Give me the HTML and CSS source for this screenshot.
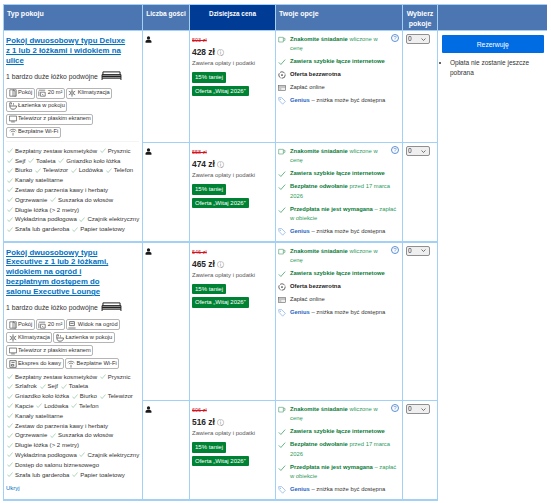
FILE: index.html
```html
<!DOCTYPE html>
<html lang="pl">
<head>
<meta charset="utf-8">
<title>Typ pokoju</title>
<link rel="stylesheet" href="styles.css">
</head>
<body>
<svg class="defs" width="0" height="0" aria-hidden="true">
  <symbol id="i-check" viewBox="0 0 10 10"><path d="M1 5.500l2.600 2.600L9 2" fill="none" stroke="currentColor" stroke-width=".9"/></symbol>
  <symbol id="i-person" viewBox="0 0 10 10"><circle cx="5" cy="2.800" r="2.300" fill="#1a1a1a"/><path d="M.8 9.500V8c0-1.800 1.600-2.600 4.200-2.600S9.200 6.200 9.200 8v1.500z" fill="#1a1a1a"/></symbol>
  <symbol id="i-bed" viewBox="0 0 23 10"><path d="M2 4V1h19v3M1 4h21v4H1zM1 8v2M22 8v2" fill="none" stroke="#222" stroke-width="1.100"/><path d="M1 6h21" stroke="#222" stroke-width="2"/></symbol>
  <symbol id="i-cup" viewBox="0 0 12 10"><path d="M1 1h7v7H1zM8 2.500h2.500v3H8" fill="none" stroke="#4d9a6c" stroke-width=".9"/></symbol>
  <symbol id="i-tag" viewBox="0 0 12 12"><path d="M1 1h4.500L11 6.500 7 10.800 1.500 5z" fill="none" stroke="#6f9fdf" stroke-width=".9"/><circle cx="3.500" cy="3.500" r=".8" fill="#6f9fdf"/></symbol>
  <symbol id="i-rot" viewBox="0 0 12 12"><circle cx="6" cy="6" r="4.800" fill="none" stroke="#333" stroke-width="1.100" stroke-dasharray="8 1.500"/><circle cx="6" cy="6" r="1.300" fill="#333"/></symbol>
  <symbol id="i-card" viewBox="0 0 12 10"><rect x=".5" y="1" width="11" height="8" fill="#eee" stroke="#666" stroke-width=".9"/><path d="M.5 3.500h11M2 6.500h3" stroke="#666" stroke-width=".9"/></symbol>
  <symbol id="i-door" viewBox="0 0 10 10"><path d="M1 1h8v8H1zM5 1v8M5 1l2.500 1.500v7" fill="none" stroke="#444" stroke-width=".8"/></symbol>
  <symbol id="i-size" viewBox="0 0 10 10"><path d="M1 1.500h8M1 3v6M3 4h6v5H3zM5 6l2 2" fill="none" stroke="#444" stroke-width=".8"/></symbol>
  <symbol id="i-snow" viewBox="0 0 10 10"><path d="M5 .5v9M1 2.800l8 4.400M9 2.800L1 7.200" stroke="#444" stroke-width=".9"/><circle cx="5" cy="5" r="1.500" fill="#fff" stroke="#444" stroke-width=".7"/></symbol>
  <symbol id="i-bath" viewBox="0 0 10 10"><path d="M1 1v4h8.500C9 8 7.500 9 5 9S1.500 8 1 5M1 1h2v2M5 2h1M5 3.500h1" fill="none" stroke="#444" stroke-width=".9"/></symbol>
  <symbol id="i-tv" viewBox="0 0 11 10"><path d="M.5 1h10v6.500H.5zM3 9h5" fill="none" stroke="#444" stroke-width=".9"/></symbol>
  <symbol id="i-wifi" viewBox="0 0 10 10"><path d="M.8 3.500C3.200 1 6.800 1 9.200 3.500M2.300 5C4 3.500 6 3.500 7.700 5M5 6v3.500" fill="none" stroke="#444" stroke-width=".8"/></symbol>
  <symbol id="i-view" viewBox="0 0 10 10"><path d="M2 .8h6v5H2zM.5 8.800h9M3 3h4" fill="none" stroke="#444" stroke-width=".9"/></symbol>
  <symbol id="i-coffee" viewBox="0 0 10 10"><path d="M1 .8h8v8.400H1zM3 3h4M3 5.500h3v2H3z" fill="none" stroke="#444" stroke-width=".9"/></symbol>
</svg>
<table class="rooms">
  <colgroup>
    <col class="c-room"><col class="c-guests"><col class="c-price"><col class="c-opts"><col class="c-sel"><col class="c-book">
  </colgroup>
  <thead>
    <tr>
      <th>Typ pokoju</th>
      <th class="center narrow">Liczba gości</th>
      <th class="center dark">Dzisiejsza cena</th>
      <th>Twoje opcje</th>
      <th class="center">Wybierz pokoje</th>
      <th></th>
    </tr>
  </thead>
  <tbody>
    <tr class="r1">
      <td class="room" rowspan="2">
        <a class="room-name" href="#">Pokój dwuosobowy typu Deluxe z 1 lub 2 łóżkami i widokiem na ulice</a>
        <p class="bed">1 bardzo duże łóżko podwójne <svg class="bed-i"><use href="#i-bed"/></svg></p>
        <div class="tags">
          <span class="tag"><svg><use href="#i-door"/></svg>Pokój</span>
          <span class="tag"><svg><use href="#i-size"/></svg>20 m²</span>
          <span class="tag"><svg><use href="#i-snow"/></svg>Klimatyzacja</span>
          <span class="tag"><svg><use href="#i-bath"/></svg>Łazienka w pokoju</span>
          <span class="tag"><svg><use href="#i-tv"/></svg>Telewizor z płaskim ekranem</span>
          <span class="tag"><svg><use href="#i-wifi"/></svg>Bezpłatne Wi-Fi</span>
        </div>
        <ul class="fac fac-a">
          <li><span class="f">Bezpłatny zestaw kosmetyków</span> <span class="f">Prysznic</span></li>
          <li><span class="f">Sejf</span> <span class="f">Toaleta</span> <span class="f">Gniazdko koło łóżka</span></li>
          <li><span class="f">Biurko</span> <span class="f">Telewizor</span> <span class="f">Lodówka</span> <span class="f">Telefon</span></li>
          <li><span class="f">Kanały satelitarne</span></li>
          <li><span class="f">Zestaw do parzenia kawy i herbaty</span></li>
          <li><span class="f">Ogrzewanie</span> <span class="f">Suszarka do włosów</span></li>
          <li><span class="f">Długie łóżka (&gt; 2 metry)</span></li>
          <li><span class="f">Wykładzina podłogowa</span> <span class="f">Czajnik elektryczny</span></li>
          <li><span class="f">Szafa lub garderoba</span> <span class="f">Papier toaletowy</span></li>
        </ul>
      </td>
      <td class="guests"><svg class="person"><use href="#i-person"/></svg></td>
      <td class="price">
        <s class="old">503 zł</s>
        <div class="now">428 zł <span class="info">ⓘ</span></div>
        <div class="incl">Zawiera opłaty i podatki</div>
        <div class="badge">15% taniej</div>
        <div class="badge">Oferta „Witaj 2026”</div>
      </td>
      <td class="opts">
        <span class="help">?</span>
        <div class="opt green first"><svg class="oi"><use href="#i-cup"/></svg><div><b>Znakomite śniadanie</b> wliczone w cenę</div></div>
        <div class="opt green"><svg class="oi"><use href="#i-check"/></svg><div><b>Zawiera szybkie łącze internetowe</b></div></div>
        <div class="opt"><svg class="oi"><use href="#i-rot"/></svg><div><b>Oferta bezzwrotna</b></div></div>
        <div class="opt"><svg class="oi"><use href="#i-card"/></svg><div>Zapłać online</div></div>
        <div class="opt"><svg class="oi"><use href="#i-tag"/></svg><div><b class="genius">Genius</b> – zniżka może być dostępna</div></div>
      </td>
      <td class="sel"><select aria-label="Wybierz pokoje"><option>0</option></select></td>
      <td class="book" rowspan="4">
        <button class="reserve" type="button">Rezerwuję</button>
        <ul class="notes"><li>Opłata nie zostanie jeszcze pobrana</li></ul>
      </td>
    </tr>
    <tr class="r2">
      <td class="guests"><svg class="person"><use href="#i-person"/></svg></td>
      <td class="price">
        <s class="old">558 zł</s>
        <div class="now">474 zł <span class="info">ⓘ</span></div>
        <div class="incl">Zawiera opłaty i podatki</div>
        <div class="badge">15% taniej</div>
        <div class="badge">Oferta „Witaj 2026”</div>
      </td>
      <td class="opts">
        <span class="help">?</span>
        <div class="opt green first"><svg class="oi"><use href="#i-cup"/></svg><div><b>Znakomite śniadanie</b> wliczone w cenę</div></div>
        <div class="opt green"><svg class="oi"><use href="#i-check"/></svg><div><b>Zawiera szybkie łącze internetowe</b></div></div>
        <div class="opt green"><svg class="oi"><use href="#i-check"/></svg><div><b>Bezpłatne odwołanie</b> przed 17 marca 2026</div></div>
        <div class="opt green"><svg class="oi"><use href="#i-check"/></svg><div><b>Przedpłata nie jest wymagana</b> – zapłać w obiekcie</div></div>
        <div class="opt"><svg class="oi"><use href="#i-tag"/></svg><div><b class="genius">Genius</b> – zniżka może być dostępna</div></div>
      </td>
      <td class="sel"><select aria-label="Wybierz pokoje"><option>0</option></select></td>
    </tr>
    <tr class="r3">
      <td class="room" rowspan="2">
        <a class="room-name" href="#">Pokój dwuosobowy typu Executive z 1 lub 2 łóżkami, widokiem na ogród i bezpłatnym dostępem do salonu Executive Lounge</a>
        <p class="bed">1 bardzo duże łóżko podwójne <svg class="bed-i"><use href="#i-bed"/></svg></p>
        <div class="tags">
          <span class="tag"><svg><use href="#i-door"/></svg>Pokój</span>
          <span class="tag"><svg><use href="#i-size"/></svg>20 m²</span>
          <span class="tag"><svg><use href="#i-view"/></svg>Widok na ogród</span>
          <span class="tag"><svg><use href="#i-snow"/></svg>Klimatyzacja</span>
          <span class="tag"><svg><use href="#i-bath"/></svg>Łazienka w pokoju</span>
          <span class="tag"><svg><use href="#i-tv"/></svg>Telewizor z płaskim ekranem</span>
          <span class="tag"><svg><use href="#i-coffee"/></svg>Ekspres do kawy</span>
          <span class="tag"><svg><use href="#i-wifi"/></svg>Bezpłatne Wi-Fi</span>
        </div>
        <ul class="fac fac-b">
          <li><span class="f">Bezpłatny zestaw kosmetyków</span> <span class="f">Prysznic</span></li>
          <li><span class="f">Szlafrok</span> <span class="f">Sejf</span> <span class="f">Toaleta</span></li>
          <li><span class="f">Gniazdko koło łóżka</span> <span class="f">Biurko</span> <span class="f">Telewizor</span></li>
          <li><span class="f">Kapcie</span> <span class="f">Lodówka</span> <span class="f">Telefon</span></li>
          <li><span class="f">Kanały satelitarne</span></li>
          <li><span class="f">Zestaw do parzenia kawy i herbaty</span></li>
          <li><span class="f">Ogrzewanie</span> <span class="f">Suszarka do włosów</span></li>
          <li><span class="f">Długie łóżka (&gt; 2 metry)</span></li>
          <li><span class="f">Wykładzina podłogowa</span> <span class="f">Czajnik elektryczny</span></li>
          <li><span class="f">Dostęp do salonu biznesowego</span></li>
          <li><span class="f">Szafa lub garderoba</span> <span class="f">Papier toaletowy</span></li>
        </ul>
        <a class="hide" href="#">Ukryj</a>
      </td>
      <td class="guests"><svg class="person"><use href="#i-person"/></svg></td>
      <td class="price">
        <s class="old">546 zł</s>
        <div class="now">465 zł <span class="info">ⓘ</span></div>
        <div class="incl">Zawiera opłaty i podatki</div>
        <div class="badge">15% taniej</div>
        <div class="badge">Oferta „Witaj 2026”</div>
      </td>
      <td class="opts">
        <span class="help">?</span>
        <div class="opt green first"><svg class="oi"><use href="#i-cup"/></svg><div><b>Znakomite śniadanie</b> wliczone w cenę</div></div>
        <div class="opt green"><svg class="oi"><use href="#i-check"/></svg><div><b>Zawiera szybkie łącze internetowe</b></div></div>
        <div class="opt"><svg class="oi"><use href="#i-rot"/></svg><div><b>Oferta bezzwrotna</b></div></div>
        <div class="opt"><svg class="oi"><use href="#i-card"/></svg><div>Zapłać online</div></div>
        <div class="opt"><svg class="oi"><use href="#i-tag"/></svg><div><b class="genius">Genius</b> – zniżka może być dostępna</div></div>
      </td>
      <td class="sel"><select aria-label="Wybierz pokoje"><option>0</option></select></td>
    </tr>
    <tr class="r4">
      <td class="guests"><svg class="person"><use href="#i-person"/></svg></td>
      <td class="price">
        <s class="old">606 zł</s>
        <div class="now">516 zł <span class="info">ⓘ</span></div>
        <div class="incl">Zawiera opłaty i podatki</div>
        <div class="badge">15% taniej</div>
        <div class="badge">Oferta „Witaj 2026”</div>
      </td>
      <td class="opts">
        <span class="help">?</span>
        <div class="opt green first"><svg class="oi"><use href="#i-cup"/></svg><div><b>Znakomite śniadanie</b> wliczone w cenę</div></div>
        <div class="opt green"><svg class="oi"><use href="#i-check"/></svg><div><b>Zawiera szybkie łącze internetowe</b></div></div>
        <div class="opt green"><svg class="oi"><use href="#i-check"/></svg><div><b>Bezpłatne odwołanie</b> przed 17 marca 2026</div></div>
        <div class="opt green"><svg class="oi"><use href="#i-check"/></svg><div><b>Przedpłata nie jest wymagana</b> – zapłać w obiekcie</div></div>
        <div class="opt"><svg class="oi"><use href="#i-tag"/></svg><div><b class="genius">Genius</b> – zniżka może być dostępna</div></div>
      </td>
      <td class="sel"><select aria-label="Wybierz pokoje"><option>0</option></select></td>
    </tr>
  </tbody>
</table>
</body>
</html>
```
FILE: styles.css
```css
* { box-sizing: border-box; }
html, body { margin: 0; padding: 0; height: 503px; overflow: hidden; background: #fff; }
body { padding: 4px 0 0 3px; font-family: "Liberation Sans", Arial, sans-serif; font-size: 6.2px; line-height: 9.8px; color: #333; }
.defs { position: absolute; }
.rooms { table-layout: fixed; border-collapse: collapse; width: 543px; }
.c-room { width: 139px; }
.c-guests { width: 47px; }
.c-price { width: 86px; }
.c-opts { width: 127px; }
.c-sel { width: 35px; }
.c-book { width: 109px; }
th { height: 26px; background: #4c76b2; color: #fff; font-size: 7px; font-weight: 700; text-align: left; vertical-align: top; padding: 4px 2px 0 3px; line-height: 10px; border: 1px solid #a3d0f5; }
th.center { text-align: center; padding-left: 1px; padding-right: 1px; }
th.narrow { font-size: 6.6px; }
th.dark { background: #003b95; font-size: 6.4px; }
th:last-child { border-right: 0; }
td { vertical-align: top; padding: 0; border: 1px solid #a3d0f5; }
tbody tr.r1 { height: 112px; }
tbody tr.r2 { height: 99px; }
tbody tr.r3 { height: 159px; }
tbody tr.r4 { height: 99px; }
tr.r3 > td { border-top: 2px solid #a3d0f5; }
tr.r4 > td { border-bottom: 2px solid #a3d0f5; }
td.room { border-bottom: 2px solid #a3d0f5; }
td.book { border-right: 0; border-bottom: 0; padding: 4px 3px 0 4px; }
.room { padding: 5px 3px 0 2px; }
.room-name { display: block; max-width: 120px; color: #0071c2; font-size: 7.8px; font-weight: 700; line-height: 9.9px; text-decoration: underline; }
.bed { margin: 5px 0 6px; font-size: 6.8px; line-height: 10px; color: #333; white-space: nowrap; }
.bed-i { display: inline-block; width: 23px; height: 9px; vertical-align: -1px; }
.tags { display: flex; flex-wrap: wrap; gap: 2px 1px; }
.tag { display: inline-flex; align-items: center; height: 11px; padding: 0 1.5px; border: 1px solid #b5b5b5; border-radius: 2px; font-size: 5.7px; white-space: nowrap; color: #333; }
.tag svg { width: 8px; height: 8px; margin-right: 1.5px; }
.fac { list-style: none; margin: 3.5px 0 0; padding: 0; font-size: 6.05px; line-height: 9.8px; }
.fac-a { margin-top: 3px; padding-top: 5px; border-top: 1px solid #f4f4f4; }
.fac li { height: 9.8px; white-space: nowrap; }
.f::before { content: ""; display: inline-block; width: 6px; height: 5px; margin: 0 2px 0 1px; vertical-align: -.5px; background: url("data:image/svg+xml,%3Csvg xmlns='http://www.w3.org/2000/svg' viewBox='0 0 6 5'%3E%3Cpath d='M.4 2.600l1.700 1.900L5.600.5' fill='none' stroke='%2378b98f' stroke-width='.6'/%3E%3C/svg%3E") no-repeat center / contain; }
.hide { display: block; margin-top: 4px; color: #0071c2; font-size: 6px; text-decoration: none; }
.guests { padding: 5px 0 0 2px; }
.person { display: block; width: 7px; height: 7px; }
.price { padding: 6px 2px 0 2px; }
.old { display: block; color: #d4111e; font-size: 5.5px; line-height: 7px; }
.now { margin-top: 2px; font-size: 8.4px; line-height: 12px; font-weight: 700; color: #262626; }
.info { font-weight: 400; font-size: 7px; color: #777; }
.incl { margin-top: 0; font-size: 6px; line-height: 9px; color: #595959; }
.badge { display: block; width: fit-content; margin-top: 3px; height: 10.5px; padding: 0 3px; background: #008234; border-radius: 1px; color: #fff; font-size: 6px; line-height: 10.5px; white-space: nowrap; }
.incl + .badge { margin-top: 4px; }
.opts { position: relative; padding: 4px 3px 0 2px; }
.help { position: absolute; right: 3px; top: 3px; width: 8px; height: 8px; border: .8px solid #5b8fd8; border-radius: 50%; color: #5b8fd8; font-size: 6px; line-height: 6.4px; text-align: center; }
.opt { display: flex; margin-bottom: 3.6px; font-size: 5.85px; line-height: 9.4px; color: #333; }
.opt.first { padding-right: 18px; }
.opt.green { color: #2c9a5a; }
.opt b { color: #1a1a1a; }
.opt.green b { color: #0a7a38; }
.opt b.genius { color: #2a64c2; }
.oi { flex: none; width: 8px; height: 8px; margin: 1px 4px 0 0; color: #2c9a5a; }
.sel { padding: 3px 0 0 3px; }
select { appearance: none; display: block; width: 24px; height: 10px; padding: 0 0 0 1px; border: 1px solid #8f8f8f; border-radius: 2px; background: #efefef url("data:image/svg+xml,%3Csvg xmlns='http://www.w3.org/2000/svg' width='5' height='3'%3E%3Cpath d='M.5.5l2 2 2-2' fill='none' stroke='%23555' stroke-width='.8'/%3E%3C/svg%3E") no-repeat right 3px center; font-family: inherit; font-size: 6.5px; line-height: 8px; color: #333; }
.reserve { display: block; width: 100%; height: 18px; border: 0; border-radius: 1px; background: #006ce4; color: #fff; font-family: inherit; font-size: 6.8px; }
.notes { margin: 5px 0 0; padding: 0 0 0 8px; font-size: 6.5px; line-height: 10px; color: #333; }
```
